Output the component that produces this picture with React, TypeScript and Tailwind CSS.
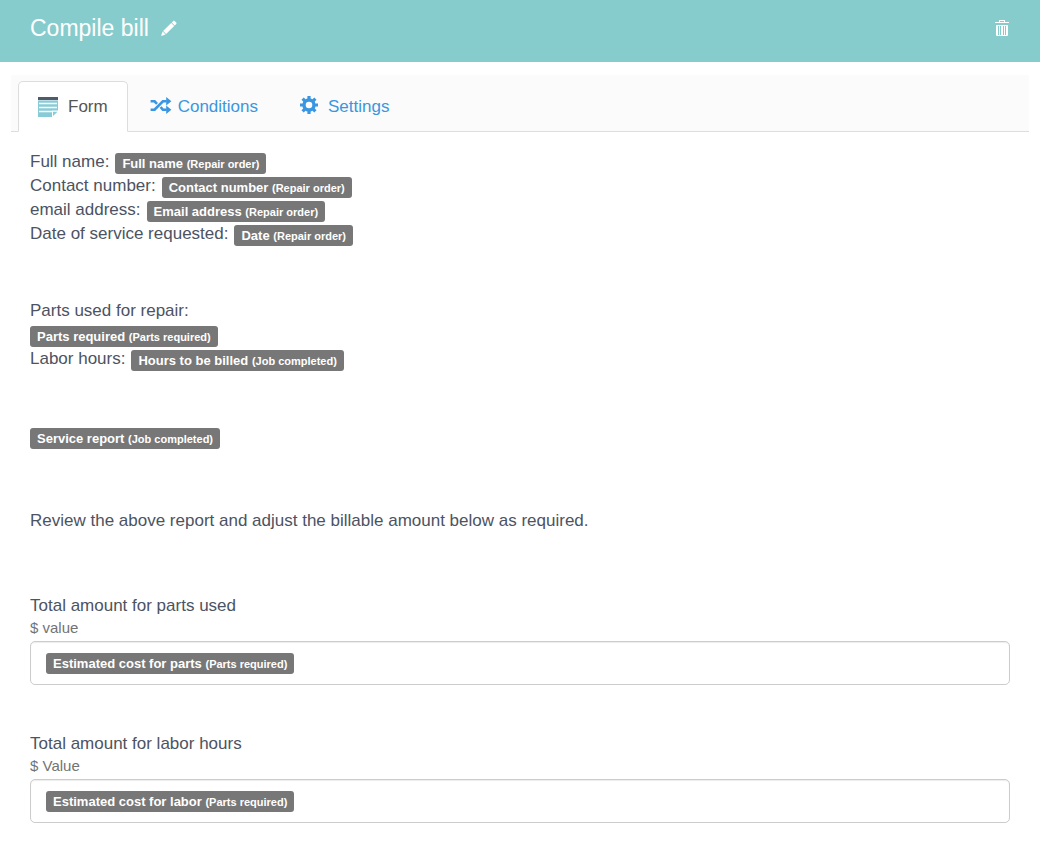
import React, { useState } from 'react';

interface Tag {
  name: string;
  source: string;
}

interface Line {
  text?: string;
  tag?: Tag;
}

const customerLines: Line[] = [
  { text: 'Full name:', tag: { name: 'Full name', source: 'Repair order' } },
  { text: 'Contact number:', tag: { name: 'Contact number', source: 'Repair order' } },
  { text: 'email address:', tag: { name: 'Email address', source: 'Repair order' } },
  { text: 'Date of service requested:', tag: { name: 'Date', source: 'Repair order' } },
];

const workLines: Line[] = [
  { text: 'Parts used for repair:' },
  { tag: { name: 'Parts required', source: 'Parts required' } },
  { text: 'Labor hours:', tag: { name: 'Hours to be billed', source: 'Job completed' } },
];

const PencilIcon = () => (
  <svg className="h-4 w-4" viewBox="0 0 16 16" fill="currentColor" aria-hidden="true">
    <path d="M12.2 0.9a1 1 0 0 1 1.4 0l1.6 1.6a1 1 0 0 1 0 1.4l-1.5 1.5-3-3zM10.2 2.9l3 3-8.1 8.1-3-3zM1.6 11.5l3 3L0 16z" />
  </svg>
);

const TrashIcon = () => (
  <svg className="h-4 w-4" viewBox="0 0 16 16" fill="currentColor" aria-hidden="true">
    <path fillRule="evenodd" d="M5 0h6v2h4v1H1V2h4zM6 1v1h4V1zM2 5h12v10q0 1-1 1H3q-1 0-1-1zM4 6v9h1V6zM6 6v9h1V6zM9 6v9h1V6zM11 6v9h1V6z" />
  </svg>
);

const FormIcon = () => (
  <svg className="h-5 w-5" viewBox="0 0 20 20" aria-hidden="true">
    <path d="M0 3h20v11l-6 6H0z" fill="#87cbd7" />
    <path d="M0 0h20v3H0z" fill="#4f5a6b" />
    <path d="M0 3.5h20" stroke="#c5e3ea" strokeWidth="0.8" />
    <path d="M1 6.5h18M1 10.5h18M1 14.5h13" stroke="#fff" strokeWidth="1.3" />
    <path d="M14 20.5v-7h6.5v1z" fill="#fff" />
    <path d="M15 19v-4.2h4.5z" fill="#87cbd7" />
  </svg>
);

const ShuffleIcon = () => (
  <svg className="mb-[3px] h-[17px] w-[22px]" viewBox="0 0 22 18" aria-hidden="true">
    <path d="M0 4.5h4.2l2.6 2.7M10.6 10.6l2.4 2.9h4M0 13.5h4.2L13 4.5h4" fill="none" stroke="currentColor" strokeWidth="2.8" />
    <path d="M16.5 0l5.5 4.5-5.5 4.5zM16.5 9l5.5 4.5-5.5 4.5z" fill="currentColor" />
  </svg>
);

const CogIcon = () => (
  <svg className="mb-[3px] h-[18px] w-[18px]" viewBox="0 0 18 18" aria-hidden="true">
    <circle cx="9" cy="9" r="5" fill="none" stroke="currentColor" strokeWidth="3.4" />
    <path
      d="M9 0v3.5M9 14.5V18M0 9h3.5M14.5 9H18M2.6 2.6l2.5 2.5M12.9 12.9l2.5 2.5M2.6 15.4l2.5-2.5M12.9 5.1l2.5-2.5"
      stroke="currentColor"
      strokeWidth="3.2"
    />
  </svg>
);

const tabs = [
  { id: 'form', label: 'Form', icon: <FormIcon />, gap: 'gap-2.5' },
  { id: 'conditions', label: 'Conditions', icon: <ShuffleIcon />, gap: 'gap-1.5' },
  { id: 'settings', label: 'Settings', icon: <CogIcon />, gap: 'gap-2.5' },
];

const TagBadge: React.FC<{ tag: Tag }> = ({ tag }) => (
  <span className="inline-block shrink-0 rounded-[3px] bg-[#777777] px-[7px] text-[13px] leading-[21px] font-bold whitespace-nowrap text-white">
    {tag.name} <small className="text-[11px] leading-none">({tag.source})</small>
  </span>
);

const TextLine: React.FC<{ line: Line }> = ({ line }) => (
  <div className="flex h-6 gap-1.5">
    {line.text && <span>{line.text}</span>}
    {line.tag && (
      <span className="flex pt-[3px]">
        <TagBadge tag={line.tag} />
      </span>
    )}
  </div>
);

const AmountField: React.FC<{ id: string; label: string; hint: string; tag: Tag }> = ({ id, label, hint, tag }) => (
  <div>
    <label htmlFor={id} className="block">
      {label}
    </label>
    <p id={`${id}-hint`} className="mb-[3px] text-[15px] leading-5 text-[#737373]">
      {hint}
    </p>
    <div className="flex h-11 items-center gap-2 rounded-[5px] border border-[#cccccc] px-[15px] shadow-[inset_0_1px_1px_rgba(0,0,0,0.075)]">
      <TagBadge tag={tag} />
      <input id={id} type="text" aria-describedby={`${id}-hint`} className="min-w-0 flex-1 bg-transparent outline-none" />
    </div>
  </div>
);

const App: React.FC = () => {
  const [activeTab, setActiveTab] = useState('form');

  return (
    <div className="min-h-screen bg-white pb-9 font-['Liberation_Sans',Arial,sans-serif] text-[17px] leading-6 text-[#4c5362]">
      <header className="flex items-center justify-between bg-[#87cccc] px-[30px] pt-3 pb-[18px] text-white">
        <div className="flex items-center gap-3">
          <h1 className="text-[23px] leading-8">Compile bill</h1>
          <button type="button" aria-label="Edit title">
            <PencilIcon />
          </button>
        </div>
        <button type="button" aria-label="Delete">
          <TrashIcon />
        </button>
      </header>

      <div role="tablist" className="mx-[11px] mt-[13px] flex gap-0.5 border-b border-[#dddddd] bg-[#fbfbfb] px-[7px] pt-1.5">
        {tabs.map((tab) => (
          <button
            key={tab.id}
            type="button"
            role="tab"
            aria-selected={activeTab === tab.id}
            onClick={() => setActiveTab(tab.id)}
            className={`-mb-px flex h-[51px] items-center rounded-t-[5px] border px-[19px] ${tab.gap} ${
              activeTab === tab.id
                ? 'border-[#dddddd] border-b-white bg-white text-[#555555]'
                : 'border-transparent text-[#3a96e0]'
            }`}
          >
            {tab.icon}
            {tab.label}
          </button>
        ))}
      </div>

      <main className="px-[30px] pt-[18px]">
        <section>
          {customerLines.map((line) => (
            <TextLine key={line.text} line={line} />
          ))}
        </section>

        <section className="mt-[53px]">
          {workLines.map((line, i) => (
            <TextLine key={i} line={line} />
          ))}
        </section>

        <section className="mt-[54px]">
          <TextLine line={{ tag: { name: 'Service report', source: 'Job completed' } }} />
        </section>

        <p className="mt-[60px]">Review the above report and adjust the billable amount below as required.</p>

        <form className="mt-[61px] flex flex-col gap-[47px]" onSubmit={(e) => e.preventDefault()}>
          <AmountField
            id="parts-amount"
            label="Total amount for parts used"
            hint="$ value"
            tag={{ name: 'Estimated cost for parts', source: 'Parts required' }}
          />
          <AmountField
            id="labor-amount"
            label="Total amount for labor hours"
            hint="$ Value"
            tag={{ name: 'Estimated cost for labor', source: 'Parts required' }}
          />
        </form>
      </main>
    </div>
  );
};

export default App;
